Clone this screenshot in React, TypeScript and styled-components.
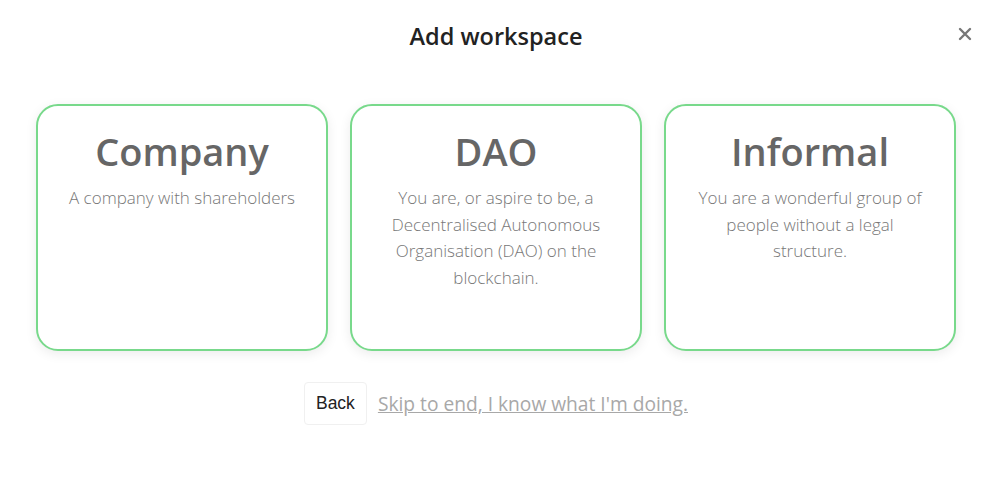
import React from "react";
import styled, { createGlobalStyle } from "styled-components";

const GlobalStyle = createGlobalStyle`
  body {
    margin: 0;
    background: #ffffff;
    font-family: "Open Sans", "Noto Sans", sans-serif;
  }
`;

const Modal = styled.section`
  position: relative;
  width: 100vw;
  height: 100vh;
  box-sizing: border-box;
  padding: 17px 36px 0;
  display: flex;
  flex-direction: column;
  align-items: center;
`;

const Title = styled.h2`
  margin: 0;
  font-size: 23.5px;
  font-weight: 600;
  color: #222;
  line-height: 38px;
`;

const CloseBtn = styled.button`
  position: absolute;
  top: 24px;
  right: 17px;
  width: 20px;
  height: 20px;
  padding: 0;
  border: none;
  background: transparent;
  cursor: pointer;
  display: flex;
  align-items: center;
  justify-content: center;
`;

const Cards = styled.div`
  display: grid;
  grid-template-columns: repeat(3, 1fr);
  gap: 22px;
  width: 100%;
  margin-top: 49px;
`;

const Card = styled.button`
  height: 247px;
  box-sizing: border-box;
  border: 2px solid #78d98b;
  border-radius: 22px;
  background: #fff;
  box-shadow: 0 3px 12px rgba(0, 0, 0, 0.08);
  padding: 19px 22px;
  display: flex;
  flex-direction: column;
  align-items: center;
  justify-content: flex-start;
  cursor: pointer;
  font-family: inherit;
`;

const CardTitle = styled.div`
  font-size: 38px;
  font-weight: 600;
  color: #666;
  line-height: 52px;
`;

const CardText = styled.div`
  margin-top: 8px;
  font-size: 17px;
  font-weight: 300;
  color: #777;
  line-height: 26.5px;
  text-align: center;
`;

const Footer = styled.div`
  display: flex;
  align-items: center;
  gap: 11px;
  margin-top: 31px;
`;

const BackBtn = styled.button`
  height: 43px;
  padding: 0 11px;
  border: 1px solid #f0f0f0;
  border-radius: 4px;
  background: #fff;
  font-family: "Liberation Sans", Arial, sans-serif;
  font-size: 17.5px;
  color: #222;
  cursor: pointer;
`;

const SkipLink = styled.a`
  font-size: 19.2px;
  color: #a8a8a8;
  text-decoration: underline;
  cursor: pointer;
`;

const options = [
  { title: "Company", text: "A company with shareholders" },
  {
    title: "DAO",
    text: "You are, or aspire to be, a Decentralised Autonomous Organisation (DAO) on the blockchain.",
  },
  {
    title: "Informal",
    text: "You are a wonderful group of people without a legal structure.",
  },
];

const App = () => {
  return (
    <>
      <GlobalStyle />
      <Modal>
        <Title>Add workspace</Title>
        <CloseBtn aria-label="close">
          <svg width="14" height="14" viewBox="0 0 14 14">
            <path
              d="M2 2L12 12M12 2L2 12"
              stroke="#777"
              strokeWidth="2.4"
              strokeLinecap="round"
            />
          </svg>
        </CloseBtn>
        <Cards>
          {options.map((o) => (
            <Card key={o.title}>
              <CardTitle>{o.title}</CardTitle>
              <CardText>{o.text}</CardText>
            </Card>
          ))}
        </Cards>
        <Footer>
          <BackBtn>Back</BackBtn>
          <SkipLink>Skip to end, I know what I'm doing.</SkipLink>
        </Footer>
      </Modal>
    </>
  );
};

export default App;
